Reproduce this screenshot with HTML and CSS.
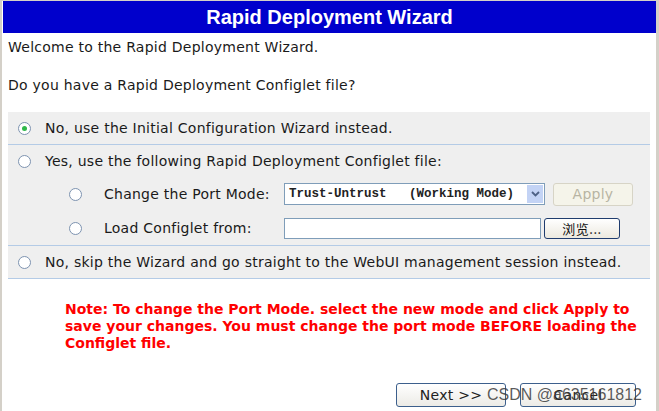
FILE: index.html
```html
<!DOCTYPE html>
<html>
<head>
<meta charset="utf-8">
<link rel="stylesheet" href="styles.css">
</head>
<body>
<div class="frame">
  <div class="header">Rapid Deployment Wizard</div>
  <div class="content">
    <p class="intro first">Welcome to the Rapid Deployment Wizard.</p>
    <p class="intro second">Do you have a Rapid Deployment Configlet file?</p>
    <div class="panel">
      <div class="row main">
        <span class="radio checked"></span>
        <span class="label">No, use the Initial Configuration Wizard instead.</span>
      </div>
      <div class="group">
        <div class="row main">
          <span class="radio"></span>
          <span class="label">Yes, use the following Rapid Deployment Configlet file:</span>
        </div>
        <div class="row sub">
          <span class="radio"></span>
          <span class="label fixed">Change the Port Mode:</span>
          <div class="select">
            <span class="select-text">Trust-Untrust&nbsp;&nbsp;&nbsp;(Working Mode)</span>
            <span class="select-arrow">
              <svg width="9" height="6" viewBox="0 0 9 6"><path d="M1 1 L4.5 4.5 L8 1" fill="none" stroke="#4d6185" stroke-width="1.8"/></svg>
            </span>
          </div>
          <span class="btn disabled apply">Apply</span>
        </div>
        <div class="row sub">
          <span class="radio"></span>
          <span class="label fixed">Load Configlet from:</span>
          <div class="file-input"></div>
          <span class="btn browse">浏览...</span>
        </div>
      </div>
      <div class="row main last">
        <span class="radio"></span>
        <span class="label">No, skip the Wizard and go straight to the WebUI management session instead.</span>
      </div>
    </div>
    <div class="note">Note: To change the Port Mode. select the new mode and click Apply to save your changes. You must change the port mode BEFORE loading the Configlet file.</div>
    <div class="actions">
      <span class="btn action next">Next &gt;&gt;</span>
      <span class="btn action cancel">Cancel</span>
      <span class="watermark">CSDN @a635161812</span>
    </div>
  </div>
</div>
</body>
</html>
```
FILE: styles.css
```css
html, body {
  margin: 0;
  padding: 0;
  background: #ffffff;
}
.frame {
  box-sizing: border-box;
  height: 411px;
  border-top: 1px solid #d4d0c8;
  border-left: 2px solid #d4d0c8;
  border-right: 3px solid #d4d0c8;
  background: #ffffff;
  font-family: "DejaVu Sans", Verdana, sans-serif;
  font-size: 14px;
  letter-spacing: 0.25px;
  color: #1a1a1a;
}
.header {
  height: 32px;
  margin-left: 1px;
  background: #0000cc;
  color: #ffffff;
  font-family: "Liberation Sans", Arial, sans-serif;
  font-weight: bold;
  font-size: 20px;
  letter-spacing: 0;
  line-height: 32px;
  text-align: center;
}
.content {
  padding: 0 6px 0 6px;
  position: relative;
}
.intro {
  margin: 0;
  line-height: 17px;
}
.intro.first { padding-top: 6px; }
.intro.second { padding-top: 21px; }
.panel {
  margin-top: 18px;
  background: #efefef;
  width: 642px;
}
.row {
  display: flex;
  align-items: center;
}
.row.main {
  height: 32px;
  padding-left: 10px;
  border-bottom: 1px solid #b4cbe6;
}
.group > .row.main { border-bottom: none; }
.group {
  border-bottom: 1px solid #b4cbe6;
}
.row.sub {
  height: 34px;
  padding-left: 61px;
}
.radio {
  box-sizing: border-box;
  width: 13px;
  height: 13px;
  border: 1px solid #7d93b0;
  border-radius: 50%;
  background: #ffffff;
  flex: none;
  display: flex;
  align-items: center;
  justify-content: center;
}
.radio.checked::after {
  content: "";
  width: 5px;
  height: 5px;
  border-radius: 50%;
  background: #2fb84a;
}
.row .label {
  margin-left: 14px;
  white-space: nowrap;
}
.row.sub .label { margin-left: 22px; }
.label.fixed {
  width: 180px;
}
.select {
  box-sizing: border-box;
  width: 261px;
  height: 22px;
  border: 1px solid #7f9db9;
  background: #ffffff;
  display: flex;
  align-items: center;
  justify-content: space-between;
  padding: 1px 1px 1px 4px;
}
.select-text {
  font-family: "Liberation Mono", "Courier New", monospace;
  font-size: 12.5px;
  font-weight: bold;
  color: #222;
  letter-spacing: 0;
}
.select-arrow {
  width: 16px;
  height: 18px;
  background: #c3d3f5;
  display: flex;
  align-items: center;
  justify-content: center;
}
.btn {
  box-sizing: border-box;
  display: inline-flex;
  align-items: center;
  justify-content: center;
  font-size: 14px;
}
.apply {
  margin-left: 8px;
  width: 80px;
  height: 23px;
  border: 1px solid #d7d4c6;
  border-radius: 3px;
  background: #f5f4ea;
  color: #b8b4a3;
}
.file-input {
  box-sizing: border-box;
  width: 257px;
  height: 21px;
  border: 1px solid #7f9db9;
  background: #ffffff;
}
.browse {
  margin-left: 3px;
  width: 76px;
  height: 21px;
  border: 1px solid #1f3c6e;
  border-radius: 3px;
  background: linear-gradient(#ffffff, #ece9df);
  color: #111;
  font-family: "Noto Sans CJK SC", "DejaVu Sans", sans-serif;
  font-size: 13px;
  letter-spacing: 0.5px;
}
.note {
  margin: 22px 0 0 57px;
  width: 600px;
  color: #ff0000;
  font-weight: bold;
  font-size: 14px;
  letter-spacing: 0;
  line-height: 17px;
}
.actions {
  position: relative;
  display: flex;
  margin-top: 31px;
  padding-left: 388px;
  gap: 14px;
}
.action {
  height: 24px;
  border: 1px solid #3c5f8c;
  border-radius: 3px;
  background: linear-gradient(#ffffff, #ecebe6);
  color: #222;
}
.next { width: 110px; }
.cancel { width: 116px; }
.watermark {
  position: absolute;
  left: 479px;
  top: 3px;
  font-family: "Liberation Sans", Arial, sans-serif;
  font-size: 16px;
  letter-spacing: 0;
  color: rgba(60, 60, 60, 0.85);
  white-space: nowrap;
}
```
